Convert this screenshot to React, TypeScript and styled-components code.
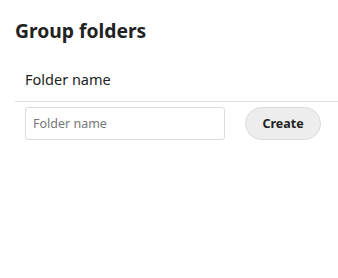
import React from 'react';
import styled, { createGlobalStyle } from 'styled-components';

const GlobalStyle = createGlobalStyle`
body {
    margin: 0;
    background: #ffffff;
    font-family: "Noto Sans", "Open Sans", sans-serif;
    color: #222222;
}
`;

const App = () => {
    return (
        <>
            <GlobalStyle />
            <Wrapper>
                <Title>Group folders</Title>
                <HeaderRow>
                    <HeaderCell>Folder name</HeaderCell>
                </HeaderRow>
                <FormRow>
                    <NameInput type="text" placeholder="Folder name" />
                    <CreateButton>Create</CreateButton>
                </FormRow>
            </Wrapper>
        </>
    )
}

const Wrapper = styled.div`
padding: 18px 0 0 15px;
`;

const Title = styled.h2`
margin: 0 0 13px 0;
font-size: 19.3px;
line-height: 26px;
font-weight: 700;
color: #222222;
`;

const HeaderRow = styled.div`
display: flex;
align-items: center;
height: 44px;
border-bottom: 1px solid #dedede;
`;

const HeaderCell = styled.div`
padding-left: 10px;
font-size: 14.5px;
color: #222222;
`;

const FormRow = styled.div`
display: flex;
align-items: center;
gap: 20px;
padding: 5px 0 0 10px;
`;

const NameInput = styled.input`
box-sizing: border-box;
width: 200px;
height: 33px;
padding: 0 7px;
border: 1px solid #dbdbdb;
border-radius: 3px;
font-family: inherit;
font-size: 12.5px;
color: #222222;
outline: none;

&::placeholder {
    color: #767676;
}
`;

const CreateButton = styled.button`
box-sizing: border-box;
width: 76px;
height: 33px;
border: 1px solid #dbdbdb;
border-radius: 17px;
background: #ededed;
font-family: inherit;
font-size: 12.5px;
font-weight: 700;
color: #222222;
cursor: pointer;
`;

export default App;
